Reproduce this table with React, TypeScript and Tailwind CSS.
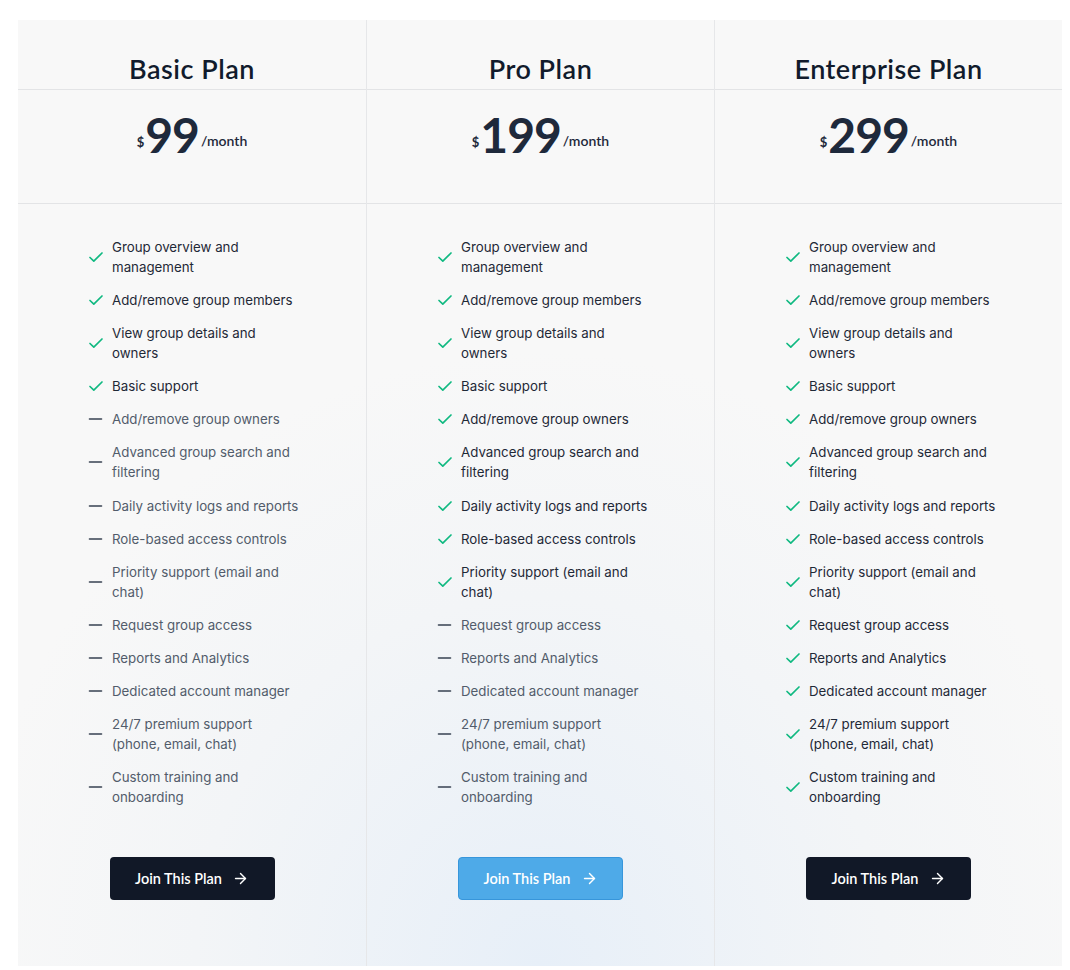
import { ArrowRight } from 'lucide-react';

// Données des plans
interface Plan {
  name: string;
  price: number;
  included: number;
  primary?: boolean;
}

const features = [
  'Group overview and management',
  'Add/remove group members',
  'View group details and owners',
  'Basic support',
  'Add/remove group owners',
  'Advanced group search and filtering',
  'Daily activity logs and reports',
  'Role-based access controls',
  'Priority support (email and chat)',
  'Request group access',
  'Reports and Analytics',
  'Dedicated account manager',
  '24/7 premium support (phone, email, chat)',
  'Custom training and onboarding',
];

const plans: Plan[] = [
  { name: 'Basic Plan', price: 99, included: 4 },
  { name: 'Pro Plan', price: 199, included: 9, primary: true },
  { name: 'Enterprise Plan', price: 299, included: 14 },
];

const headFont = { fontFamily: 'Lato, "Noto Sans", sans-serif' };

function Check() {
  return (
    <svg width="16" height="16" viewBox="0 0 16 16" fill="none" className="shrink-0">
      <path d="M2 8.5l3.8 3.6L14 4" stroke="#10b981" strokeWidth="1.7" strokeLinecap="round" strokeLinejoin="round" />
    </svg>
  );
}

function Dash() {
  return (
    <svg width="16" height="16" viewBox="0 0 16 16" fill="none" className="shrink-0">
      <path d="M1.5 8h12" stroke="#374151" strokeWidth="1.6" strokeLinecap="round" />
    </svg>
  );
}

export default function App() {
  return (
    <div className="h-screen overflow-hidden bg-white pt-[20px] pl-[18px] pr-[8px]">
      <div className="h-[946px] grid grid-cols-3 bg-[radial-gradient(ellipse_55%_65%_at_50%_100%,#e7eff8_0%,#f3f5f7_60%,#f8f8f8_100%)]">
        {plans.map((plan, i) => (
          <div
            key={plan.name}
            className={`flex flex-col ${i > 0 ? 'border-l border-[#e6e7e9]' : ''}`}
          >
            {/* Titre */}
            <div className="h-[70px] border-b border-[#e3e4e6] flex justify-center pt-[32px]">
              <h2 style={headFont} className="text-[27px] leading-[34px] font-semibold text-[#111b2c] tracking-[0.5px]">
                {plan.name}
              </h2>
            </div>

            {/* Prix */}
            <div className="h-[114px] border-b border-[#e3e4e6] flex justify-center items-start pt-[21px]">
              <div style={headFont} className="flex items-baseline text-[#1e293b]">
                <span className="text-[13px] font-bold mr-[1px] relative top-[-6px]">$</span>
                <span className="text-[48px] leading-[48px] font-bold tracking-[-1px]">{plan.price}</span>
                <span className="text-[14px] font-semibold ml-[2px] relative top-[-7px]">/month</span>
              </div>
            </div>

            {/* Fonctionnalités */}
            <ul className="pl-[70px] pt-[33px] flex flex-col gap-[13.1px]" style={{ fontFamily: 'Inter, sans-serif' }}>
              {features.map((f, idx) => {
                const ok = idx < plan.included;
                return (
                  <li key={f} className="flex items-center gap-[8px]">
                    {ok ? <Check /> : <Dash />}
                    <span className={`max-w-[192px] text-[13.3px] leading-[20px] ${ok ? 'text-[#1f2937]' : 'text-[#525c6b]'}`}>
                      {f}
                    </span>
                  </li>
                );
              })}
            </ul>

            {/* Bouton */}
            <div className="flex justify-center pt-[50px]">
              <button
                style={headFont}
                className={`w-[165px] h-[43px] rounded-[4px] flex items-center justify-center gap-[10px] text-[14.5px] font-semibold text-white ${
                  plan.primary ? 'bg-[#4eaae8] border border-[#3796db]' : 'bg-[#111827]'
                }`}
              >
                <span>Join This Plan</span>
                <ArrowRight size={17} strokeWidth={2} />
              </button>
            </div>
          </div>
        ))}
      </div>
    </div>
  );
}
